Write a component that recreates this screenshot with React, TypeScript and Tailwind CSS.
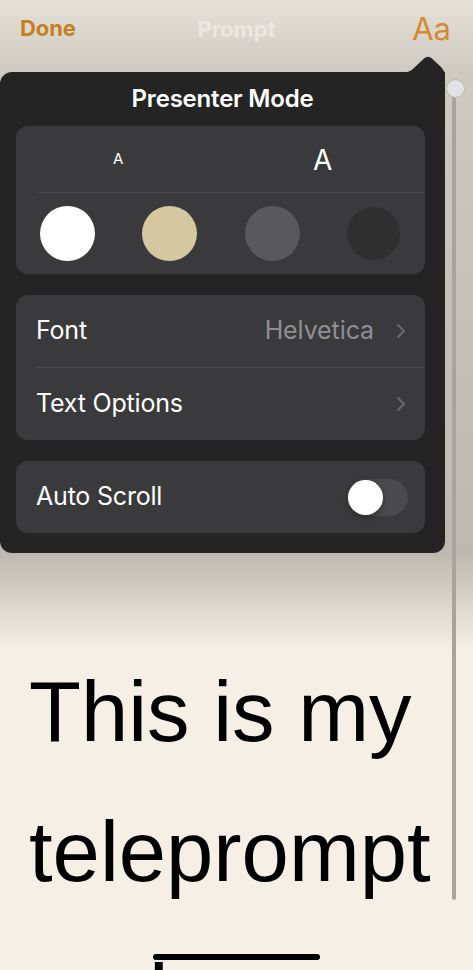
import React from "react";

const ui = { fontFamily: "Inter, 'Noto Sans', sans-serif" };
const helv = { fontFamily: "'Liberation Sans', Arial, sans-serif" };

function Chevron() {
  return (
    <svg width="10" height="16" viewBox="0 0 10 16" fill="none">
      <path d="M2 2 L8 8 L2 14" stroke="#6b6b6e" strokeWidth="1.8" strokeLinecap="round" strokeLinejoin="round" />
    </svg>
  );
}

export default function App() {
  return (
    <div className="relative h-[970px] w-[473px] overflow-hidden bg-[#f6efe5]" style={ui}>
      {/* dimmed nav area */}
      <div className="absolute left-0 top-0 h-[650px] w-full bg-[linear-gradient(to_bottom,#e6e1d8_0px,#cfcac1_72px,#c6c1b8_300px,#bdb9b0_553px,#f6efe5_650px)]" />

      {/* nav bar */}
      <div className="relative flex h-[57px] items-center justify-between pl-[20px] pr-[22px]">
        <span className="text-[22px] font-bold tracking-[-0.1px] text-[#c57f1e]">Done</span>
        <span className="absolute left-1/2 top-[13px] -translate-x-1/2 text-[22px] font-bold text-[#ece8e1]">Prompt</span>
        <span className="text-[31px] font-normal leading-none text-[#d48b2b]">Aa</span>
      </div>

      {/* teleprompter text */}
      <div className="relative pl-[29px] pt-[585px] text-[85px] leading-[140px] text-black" style={helv}>
        <div className="whitespace-nowrap">This is my</div>
        <div className="whitespace-nowrap">teleprompt</div>
        <div className="whitespace-nowrap">er. I</div>
      </div>

      {/* scrollbar */}
      <div className="absolute left-[452px] top-[90px] h-[810px] w-[4px] rounded-full bg-[#a8a49d]" />
      <div className="absolute left-[446px] top-[79px] h-[19px] w-[19px] rounded-full border border-[#b8b5b0] bg-[#e2e2e5]" />

      {/* popover arrow */}
      <svg className="absolute left-[400px] top-[55px]" width="45" height="22" viewBox="0 0 45 22">
        <path d="M0 18 Q10 18 15 12 L24 3.5 Q28 0 32 3.5 L41 12 Q45 16 45 22 L0 22 Z" fill="#242424" />
      </svg>

      {/* popover */}
      <div className="absolute left-0 top-[72px] flex h-[481px] w-[445px] flex-col rounded-[12px] rounded-tr-none bg-[#242424] pl-[16px] pr-[20px]">
        <div className="flex h-[54px] items-center justify-center pl-[4px] text-[24px] font-semibold tracking-[-0.2px] text-white">Presenter Mode</div>

        {/* size & theme card */}
        <div className="flex h-[148px] flex-col rounded-[12px] bg-[#3a3a3c]">
          <div className="flex h-[66px] items-center">
            <div className="flex flex-1 items-center justify-center text-[15px] text-white">A</div>
            <div className="flex flex-1 items-center justify-center pt-[2px] text-[28px] text-white">A</div>
          </div>
          <div className="ml-[22px] h-px bg-[#4b4b4e]" />
          <div className="flex flex-1 items-center justify-between pl-[24px] pr-[25px]">
            <div className="h-[55px] w-[55px] rounded-full bg-white" />
            <div className="h-[55px] w-[55px] rounded-full bg-[#d5c8a1]" />
            <div className="h-[55px] w-[55px] rounded-full bg-[#59595b]" />
            <div className="h-[53px] w-[53px] rounded-full bg-[#2f2f30]" />
          </div>
        </div>

        {/* font card */}
        <div className="mt-[21px] flex h-[145px] flex-col rounded-[12px] bg-[#3a3a3c]">
          <div className="flex h-[72px] items-center justify-between pl-[20px] pr-[19px]">
            <span className="text-[25px] tracking-[-0.2px] text-white">Font</span>
            <div className="flex items-center gap-[22px]">
              <span className="text-[25px] tracking-[-0.1px] text-[#8f8f93]">Helvetica</span>
              <Chevron />
            </div>
          </div>
          <div className="ml-[20px] h-px bg-[#4b4b4e]" />
          <div className="flex flex-1 items-center justify-between pl-[20px] pr-[19px]">
            <span className="text-[25px] tracking-[-0.2px] text-white">Text Options</span>
            <Chevron />
          </div>
        </div>

        {/* auto scroll card */}
        <div className="mt-[21px] flex h-[72px] items-center justify-between rounded-[12px] bg-[#3a3a3c] pl-[20px] pr-[17px]">
          <span className="text-[25px] tracking-[-0.2px] text-white">Auto Scroll</span>
          <div className="flex h-[37px] w-[61px] items-center rounded-full bg-[#4a4a4c] pl-[1px]">
            <div className="h-[35px] w-[35px] rounded-full bg-white shadow-[0_2px_6px_rgba(0,0,0,0.35)]" />
          </div>
        </div>
      </div>

      {/* home indicator */}
      <div className="absolute left-[153px] top-[954px] h-[6px] w-[167px] rounded-full bg-black" />
    </div>
  );
}
